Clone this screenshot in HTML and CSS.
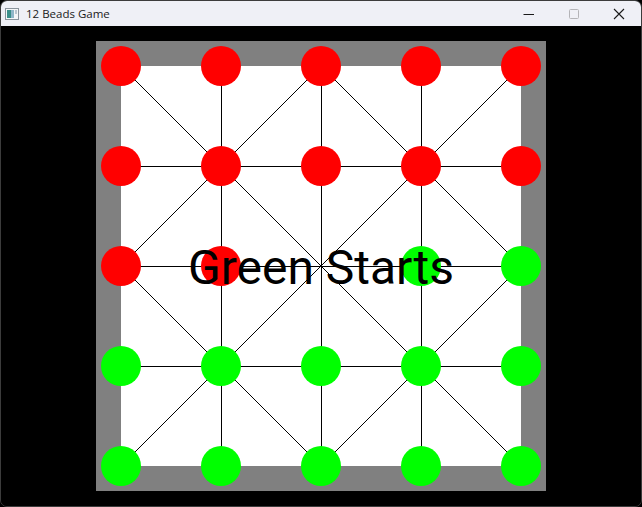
FILE: index.html
```html
<!DOCTYPE html>
<html>
<head>
<meta charset="utf-8">
<link rel="stylesheet" href="styles.css">
</head>
<body>
<div class="window">
  <div class="titlebar">
    <div class="title-left">
      <svg class="app-icon" width="14" height="12" viewBox="0 0 14 12">
        <rect x="0.5" y="0.5" width="13" height="11" fill="#f4f6f8" stroke="#8a949c"/>
        <rect x="2" y="2" width="4" height="8" fill="#3a8f8a"/>
        <rect x="6" y="2" width="3" height="8" fill="#8fb7c9"/>
        <rect x="10" y="2" width="2" height="4" fill="#b9c6cf"/>
      </svg>
      <span class="title-text">12 Beads Game</span>
    </div>
    <div class="controls">
      <div class="ctl"><svg width="12" height="12" viewBox="0 0 12 12"><line x1="0.5" y1="6.5" x2="11" y2="6.5" stroke="#1a1a1a" stroke-width="1"/></svg></div>
      <div class="ctl"><svg width="12" height="12" viewBox="0 0 12 12"><rect x="1.5" y="1.5" width="9" height="9" rx="1" fill="none" stroke="#b4b4b8" stroke-width="1"/></svg></div>
      <div class="ctl"><svg width="12" height="12" viewBox="0 0 12 12"><path d="M1 1 L11 11 M11 1 L1 11" stroke="#1a1a1a" stroke-width="1.1"/></svg></div>
    </div>
  </div>
  <div class="content">
    <div class="board">
      <div class="field">
        <svg class="lines" width="450" height="450" viewBox="-25 -25 450 450">
          <g stroke="#000" stroke-width="1" shape-rendering="crispEdges">
            <line x1="0" y1="100.5" x2="400" y2="100.5"/>
            <line x1="0" y1="200.5" x2="400" y2="200.5"/>
            <line x1="0" y1="300.5" x2="400" y2="300.5"/>
            <line x1="100.5" y1="0" x2="100.5" y2="400"/>
            <line x1="200.5" y1="0" x2="200.5" y2="400"/>
            <line x1="300.5" y1="0" x2="300.5" y2="400"/>
          </g>
          <g stroke="#000" stroke-width="1" shape-rendering="crispEdges">
            <line x1="0" y1="0" x2="400" y2="400"/>
            <line x1="400" y1="0" x2="0" y2="400"/>
            <line x1="200" y1="0" x2="0" y2="200"/>
            <line x1="200" y1="0" x2="400" y2="200"/>
            <line x1="0" y1="200" x2="200" y2="400"/>
            <line x1="400" y1="200" x2="200" y2="400"/>
          </g>
          <g fill="#ff0000">
            <circle cx="0" cy="0" r="20"/><circle cx="100" cy="0" r="20"/><circle cx="200" cy="0" r="20"/><circle cx="300" cy="0" r="20"/><circle cx="400" cy="0" r="20"/>
            <circle cx="0" cy="100" r="20"/><circle cx="100" cy="100" r="20"/><circle cx="200" cy="100" r="20"/><circle cx="300" cy="100" r="20"/><circle cx="400" cy="100" r="20"/>
            <circle cx="0" cy="200" r="20"/><circle cx="100" cy="200" r="20"/>
          </g>
          <g fill="#00ff00">
            <circle cx="300" cy="200" r="20"/><circle cx="400" cy="200" r="20"/>
            <circle cx="0" cy="300" r="20"/><circle cx="100" cy="300" r="20"/><circle cx="200" cy="300" r="20"/><circle cx="300" cy="300" r="20"/><circle cx="400" cy="300" r="20"/>
            <circle cx="0" cy="400" r="20"/><circle cx="100" cy="400" r="20"/><circle cx="200" cy="400" r="20"/><circle cx="300" cy="400" r="20"/><circle cx="400" cy="400" r="20"/>
          </g>
        </svg>
      </div>
      <div class="message">Green Starts</div>
    </div>
  </div>
</div>
</body>
</html>
```

FILE: styles.css
```css
html, body {
  margin: 0;
  padding: 0;
  background: #000;
}
.window {
  width: 642px;
  height: 507px;
  box-sizing: border-box;
  border: 1px solid #3c3c3c;
  border-radius: 7px 7px 7px 7px;
  overflow: hidden;
  display: flex;
  flex-direction: column;
  background: #000;
}
.titlebar {
  height: 25px;
  flex: none;
  background: #eff0f6;
  display: flex;
  align-items: center;
  justify-content: space-between;
}
.title-left {
  display: flex;
  align-items: center;
  padding-left: 4px;
}
.app-icon {
  display: block;
}
.title-text {
  font-family: "Open Sans", "Noto Sans", sans-serif;
  font-size: 11.5px;
  color: #1a1a1a;
  margin-left: 7px;
  margin-top: 0px;
}
.controls {
  display: flex;
  height: 100%;
}
.ctl {
  width: 45px;
  display: flex;
  align-items: center;
  justify-content: center;
}
.ctl svg { display: block; }
.content {
  flex: 1;
  background: #000;
  padding-top: 15px;
  padding-left: 95px;
}
.board {
  position: relative;
  width: 450px;
  height: 450px;
  background: #808080;
}
.field {
  position: absolute;
  left: 25px;
  top: 25px;
  width: 400px;
  height: 400px;
  background: #fff;
}
.lines {
  position: absolute;
  left: -25px;
  top: -25px;
  display: block;
}
.message {
  position: absolute;
  left: 0;
  right: 0;
  top: 199px;
  text-align: center;
  font-family: Roboto, sans-serif;
  font-size: 48px;
  line-height: 56px;
  color: #000;
}
```
